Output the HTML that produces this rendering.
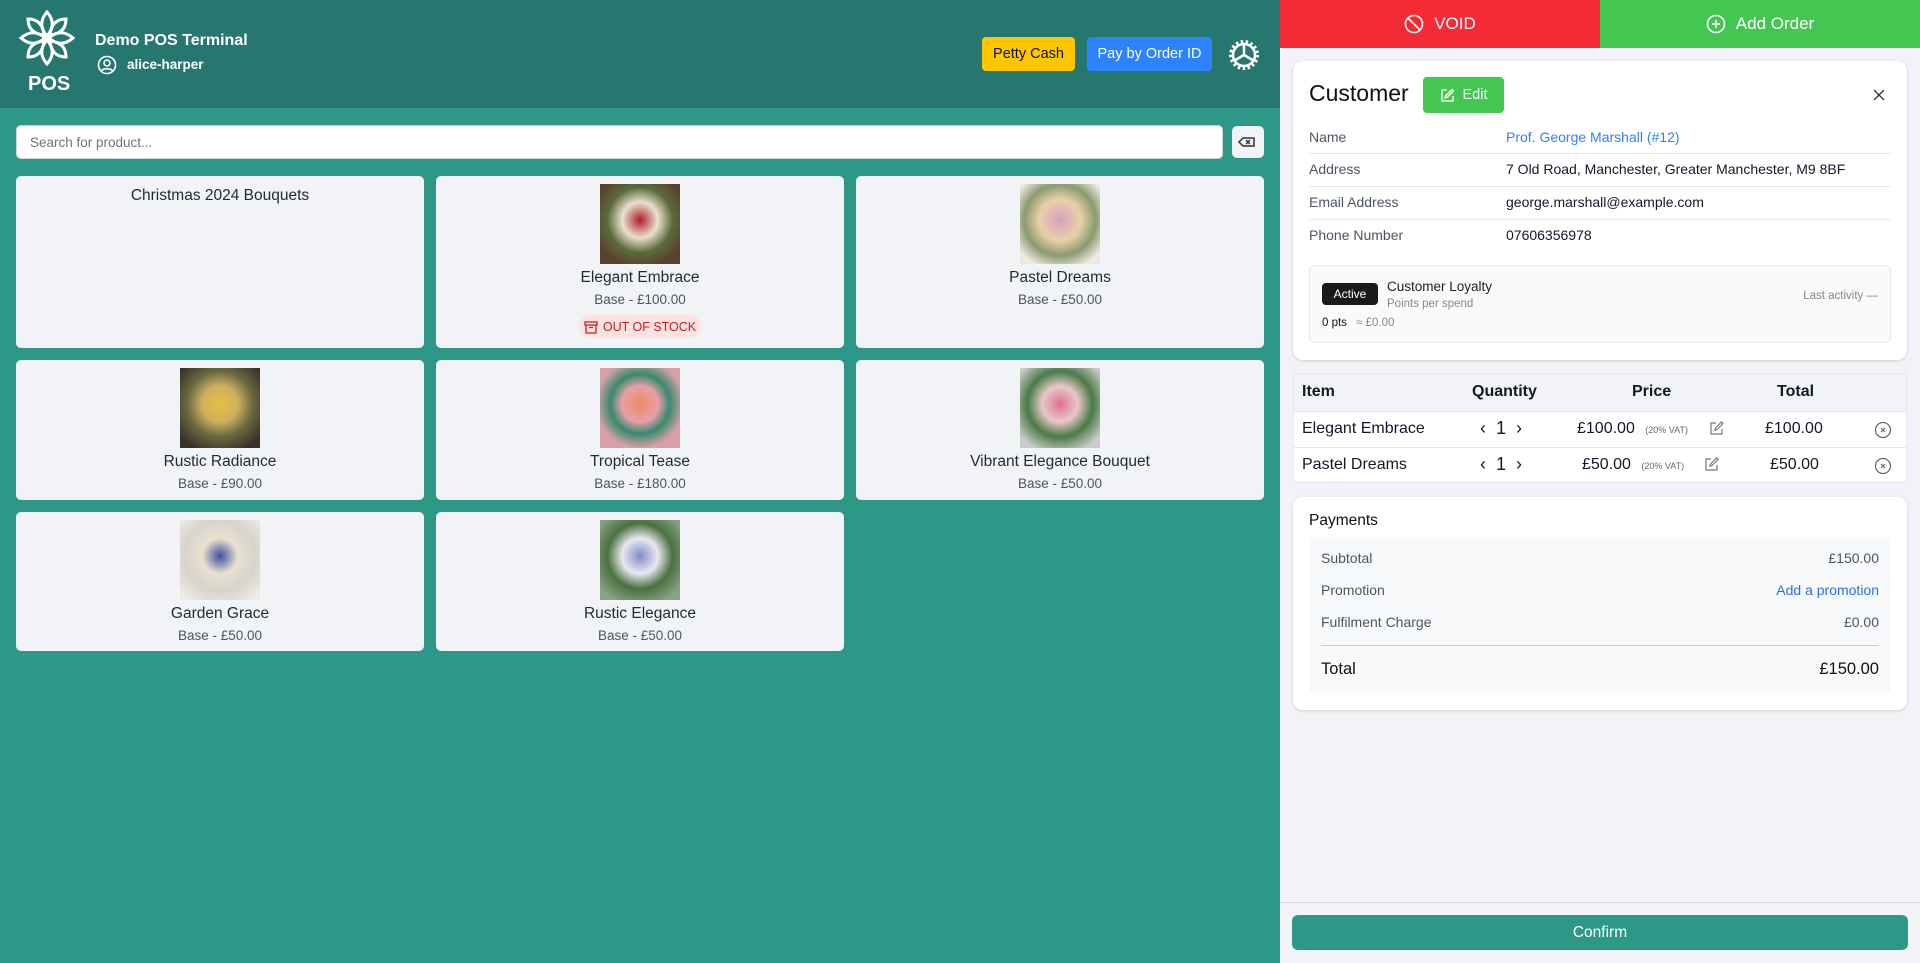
<!DOCTYPE html>
<html><head><meta charset="utf-8"><style>
*{box-sizing:border-box;margin:0;padding:0}
body{width:1920px;height:963px;overflow:hidden;font-family:"Liberation Sans",sans-serif;background:#2e9888;position:relative;color:#111827}
.abs{position:absolute}
.hdr{left:0;top:0;width:1280px;height:108px;background:#26776f}
.btn{position:absolute;border-radius:4px;font-size:14.5px;display:flex;align-items:center;justify-content:center}
.search{left:16px;top:125px;width:1207px;height:34px;background:#fff;border-radius:5px;border:1px solid #d1d5db;font-size:13.5px;color:#6b7280;padding:9px 13px}
.card{position:absolute;background:#f2f3f7;border-radius:5px;text-align:center}
.card .img{width:80px;height:80px;margin:8px auto 0}
.card .t{font-size:15.5px;color:#1f2937;margin-top:5px}
.card .p{font-size:13.5px;color:#4b5563;margin-top:5px}
.rp{left:1280px;top:0;width:640px;height:963px;background:#f2f3f6}
.panel{position:absolute;background:#fff;border-radius:10px;box-shadow:0 1px 3px rgba(0,0,0,.15)}
.row{position:absolute;left:16px;right:16px;font-size:14px;color:#4b5563}
.row span{position:absolute;left:197px;color:#111827}
.line{position:absolute;left:16px;right:16px;height:1px;background:#e5e7eb}
</style></head><body>
<div class="abs hdr"></div>
<svg class="abs" style="left:16px;top:8px" width="62" height="60" viewBox="0 0 62 60" fill="none" stroke="#fff" stroke-width="3">
<path d="M31 4 C38 12 38 20 31 28 C24 20 24 12 31 4Z"/><path d="M31 56 C38 48 38 40 31 32 C24 40 24 48 31 56Z"/>
<path d="M5 30 C13 23 21 23 29 30 C21 37 13 37 5 30Z"/><path d="M57 30 C49 23 41 23 33 30 C41 37 49 37 57 30Z"/>
<path d="M12 11 C22 11 27 17 28 27 C18 26 12 21 12 11Z"/><path d="M50 49 C40 49 35 43 34 33 C44 34 50 39 50 49Z"/>
<path d="M50 11 C50 21 44 26 34 27 C35 17 40 11 50 11Z"/><path d="M12 49 C12 39 18 34 28 33 C27 43 22 49 12 49Z"/>
</svg>
<div class="abs" style="left:28px;top:73px;color:#fff;font-size:20px;font-weight:bold">POS</div>
<div class="abs" style="left:95px;top:32px;color:#fff;font-size:16px;font-weight:bold">Demo POS Terminal</div>
<svg class="abs" style="left:97px;top:55px" width="20" height="20" viewBox="0 0 20 20" fill="none" stroke="#fff" stroke-width="1.6"><circle cx="10" cy="10" r="8.5"/><circle cx="10" cy="8" r="3"/><path d="M4.5 16 C6 13 14 13 15.5 16"/></svg>
<div class="abs" style="left:127px;top:57px;color:#fff;font-size:13.5px;font-weight:bold">alice-harper</div>
<div class="btn" style="left:982px;top:37px;width:93px;height:34px;background:#fcc700;color:#111">Petty Cash</div>
<div class="btn" style="left:1087px;top:37px;width:125px;height:34px;background:#2d83fb;color:#fff">Pay by Order ID</div>
<svg class="abs" style="left:1227px;top:38px" width="34" height="34" viewBox="0 0 34 34" fill="none" stroke="#fff"><circle cx="17" cy="17" r="13.5" stroke-dasharray="2.5 2.5" stroke-width="3"/><circle cx="17" cy="17" r="11" stroke-width="2.5"/><path d="M17 17 L17 6 M17 17 L26.5 22.5 M17 17 L7.5 22.5" stroke-width="2.5"/></svg>

<div class="abs search">Search for product...</div>
<div class="abs" style="left:1232px;top:126px;width:32px;height:32px;background:#f2f3f7;border-radius:5px"><svg width="32" height="32" viewBox="0 0 32 32" fill="none" stroke="#333" stroke-width="1.5"><path d="M11 12 H22 V20 H11 L7 16Z"/><path d="M14 14 L18 18 M18 14 L14 18"/></svg></div>

<div class="card" style="left:16px;top:176px;width:408px;height:172px"><div class="t" style="margin-top:11px">Christmas 2024 Bouquets</div></div>
<div class="card" style="left:436px;top:176px;width:408px;height:172px"><div class="img" style="background:radial-gradient(circle at 50% 45%,#b01e28 0,#e9e0cf 30%,#5a6b3a 55%,#5a4230 80%)"></div><div class="t">Elegant Embrace</div><div class="p">Base - £100.00</div>
<div style="margin:8px auto 0;width:122px;height:23px;border-radius:12px;background:#fde2e2;color:#c81e1e;font-size:12.5px;display:flex;align-items:center;justify-content:center;gap:5px"><svg width="14" height="14" viewBox="0 0 14 14" fill="none" stroke="#c81e1e" stroke-width="1.3"><rect x="1" y="2" width="12" height="3"/><path d="M2 5 V13 H12 V5 M5 7.5 H9"/></svg>OUT OF STOCK</div></div>
<div class="card" style="left:856px;top:176px;width:408px;height:172px"><div class="img" style="background:radial-gradient(circle at 50% 45%,#d8a0c0 0,#e8d0a8 35%,#8a9a70 60%,#efe8e0 85%)"></div><div class="t">Pastel Dreams</div><div class="p">Base - £50.00</div></div>
<div class="card" style="left:16px;top:360px;width:408px;height:140px"><div class="img" style="background:radial-gradient(circle at 50% 45%,#e8c040 0,#d0b060 30%,#6a6a40 55%,#3a3228 85%)"></div><div class="t">Rustic Radiance</div><div class="p">Base - £90.00</div></div>
<div class="card" style="left:436px;top:360px;width:408px;height:140px"><div class="img" style="background:radial-gradient(circle at 50% 45%,#f08a60 0,#e8a0a8 30%,#3a8a70 50%,#d8a0a8 75%)"></div><div class="t">Tropical Tease</div><div class="p">Base - £180.00</div></div>
<div class="card" style="left:856px;top:360px;width:408px;height:140px"><div class="img" style="background:radial-gradient(circle at 50% 45%,#e07090 0,#e8c8c8 30%,#4a7a48 55%,#c8ccc8 85%)"></div><div class="t">Vibrant Elegance Bouquet</div><div class="p">Base - £50.00</div></div>
<div class="card" style="left:16px;top:512px;width:408px;height:139px"><div class="img" style="background:radial-gradient(circle at 50% 45%,#4050a0 0,#e8e0d0 30%,#d8d4cc 60%,#eeeae4 90%)"></div><div class="t">Garden Grace</div><div class="p">Base - £50.00</div></div>
<div class="card" style="left:436px;top:512px;width:408px;height:139px"><div class="img" style="background:radial-gradient(circle at 50% 45%,#8088c8 0,#e8e8f0 30%,#4a7040 55%,#8aa088 85%)"></div><div class="t">Rustic Elegance</div><div class="p">Base - £50.00</div></div>

<div class="abs rp"></div>
<div class="abs" style="left:1280px;top:0;width:320px;height:48px;background:#f52a37;color:#fff;font-size:17px;display:flex;align-items:center;justify-content:center;gap:10px"><svg width="20" height="20" viewBox="0 0 20 20" fill="none" stroke="#fff" stroke-width="1.6"><circle cx="10" cy="10" r="8.5"/><path d="M4 4 L16 16"/></svg>VOID</div>
<div class="abs" style="left:1600px;top:0;width:320px;height:48px;background:#44c752;color:#fff;font-size:17px;display:flex;align-items:center;justify-content:center;gap:10px"><svg width="20" height="20" viewBox="0 0 20 20" fill="none" stroke="#fff" stroke-width="1.6"><circle cx="10" cy="10" r="8.5"/><path d="M10 6 V14 M6 10 H14"/></svg>Add Order</div>

<div class="panel" style="left:1293px;top:61px;width:614px;height:299px">
<div class="abs" style="left:16px;top:19px;font-size:23px;color:#111">Customer</div>
<div class="abs" style="left:130px;top:16px;width:81px;height:36px;background:#44c752;border-radius:4px;color:#fff;font-size:14.5px;display:flex;align-items:center;justify-content:center;gap:8px"><svg width="15" height="15" viewBox="0 0 15 15" fill="none" stroke="#fff" stroke-width="1.3"><path d="M7 2 H2 V13 H13 V8"/><path d="M12 1.5 L13.5 3 L7 9.5 L5 10 L5.5 8Z"/></svg>Edit</div>
<svg class="abs" style="left:580px;top:28px" width="12" height="12" viewBox="0 0 12 12" stroke="#333" stroke-width="1.3"><path d="M1 1 L11 11 M11 1 L1 11"/></svg>
<div class="row" style="top:68px">Name<span style="color:#2d83fb">Prof. George Marshall (#12)</span></div>
<div class="line" style="top:92px"></div>
<div class="row" style="top:100px">Address<span>7 Old Road, Manchester, Greater Manchester, M9 8BF</span></div>
<div class="line" style="top:125px"></div>
<div class="row" style="top:133px">Email Address<span>george.marshall@example.com</span></div>
<div class="line" style="top:158px"></div>
<div class="row" style="top:166px">Phone Number<span>07606356978</span></div>
<div class="abs" style="left:16px;top:204px;width:582px;height:78px;background:#f9fafb;border:1px solid #e5e7eb;border-radius:5px">
<div class="abs" style="left:12px;top:17px;width:56px;height:22px;background:#1a1a1a;border-radius:4px;color:#fff;font-size:12px;display:flex;align-items:center;justify-content:center">Active</div>
<div class="abs" style="left:77px;top:13px;font-size:13.5px;color:#222">Customer Loyalty</div>
<div class="abs" style="left:77px;top:32px;font-size:11.5px;color:#888">Points per spend</div>
<div class="abs" style="left:12px;top:51px;font-size:11.5px;color:#111">0 pts <span style="color:#888;margin-left:6px">≈ £0.00</span></div>
<div class="abs" style="right:12px;top:24px;font-size:11.5px;color:#888">Last activity —</div>
</div></div>

<div class="abs" style="left:1293px;top:373px;width:614px;height:110px;background:#fff;border:1px solid #e5e7eb">
<div class="abs" style="left:0;top:0;width:612px;height:37px;background:#f2f3f6"></div>
<div class="abs" style="left:0;top:73px;width:612px;height:1px;background:#e5e7eb"></div>
<div class="abs" style="left:0;top:37px;width:612px;height:1px;background:#e5e7eb"></div>
<div class="abs" style="left:8px;top:9px;font-size:16px;font-weight:bold">Item</div>
<div class="abs" style="left:178px;top:9px;font-size:16px;font-weight:bold">Quantity</div>
<div class="abs" style="left:338px;top:9px;font-size:16px;font-weight:bold">Price</div>
<div class="abs" style="left:483px;top:9px;font-size:16px;font-weight:bold">Total</div>
<div class="abs" style="left:8px;top:46px;font-size:16px">Elegant Embrace</div>
<div class="abs" style="left:186px;top:44px;font-size:18px">‹&nbsp; 1 &nbsp;›</div>
<div class="abs" style="left:283px;top:46px;font-size:16px">£100.00 <span style="font-size:9px;color:#666;margin-left:6px">(20% VAT)</span></div>
<svg class="abs" style="left:415px;top:46px" width="16" height="16" viewBox="0 0 16 16" fill="none" stroke="#777" stroke-width="1.2"><path d="M7 3 H2 V14 H13 V9"/><path d="M12.5 2 L14 3.5 L8 9.5 L6 10 L6.5 8Z"/></svg>
<div class="abs" style="left:471px;top:46px;font-size:16px">£100.00</div>
<svg class="abs" style="left:580px;top:47px" width="18" height="18" viewBox="0 0 18 18" fill="none" stroke="#666" stroke-width="1.2"><circle cx="9" cy="9" r="7.5"/><path d="M7 7 L11 11 M11 7 L7 11"/></svg>
<div class="abs" style="left:8px;top:82px;font-size:16px">Pastel Dreams</div>
<div class="abs" style="left:186px;top:80px;font-size:18px">‹&nbsp; 1 &nbsp;›</div>
<div class="abs" style="left:288px;top:82px;font-size:16px">£50.00 <span style="font-size:9px;color:#666;margin-left:6px">(20% VAT)</span></div>
<svg class="abs" style="left:410px;top:82px" width="16" height="16" viewBox="0 0 16 16" fill="none" stroke="#777" stroke-width="1.2"><path d="M7 3 H2 V14 H13 V9"/><path d="M12.5 2 L14 3.5 L8 9.5 L6 10 L6.5 8Z"/></svg>
<div class="abs" style="left:476px;top:82px;font-size:16px">£50.00</div>
<svg class="abs" style="left:580px;top:83px" width="18" height="18" viewBox="0 0 18 18" fill="none" stroke="#666" stroke-width="1.2"><circle cx="9" cy="9" r="7.5"/><path d="M7 7 L11 11 M11 7 L7 11"/></svg>
</div>

<div class="panel" style="left:1293px;top:497px;width:614px;height:213px">
<div class="abs" style="left:16px;top:15px;font-size:15.5px;color:#111">Payments</div>
<div class="abs" style="left:16px;top:40px;width:582px;height:156px;background:#f8f9fb;border-radius:5px;font-size:14px;color:#4b5563">
<div class="abs" style="left:12px;top:13px">Subtotal</div><div class="abs" style="right:12px;top:13px">£150.00</div>
<div class="abs" style="left:12px;top:45px">Promotion</div><div class="abs" style="right:12px;top:45px;color:#2d6cf0">Add a promotion</div>
<div class="abs" style="left:12px;top:77px">Fulfilment Charge</div><div class="abs" style="right:12px;top:77px">£0.00</div>
<div class="abs" style="left:12px;right:12px;top:108px;height:1px;background:#c8ccd2"></div>
<div class="abs" style="left:12px;top:123px;font-size:16.5px;color:#111">Total</div><div class="abs" style="right:12px;top:123px;font-size:16.5px;color:#111">£150.00</div>
</div></div>

<div class="abs" style="left:1280px;top:902px;width:640px;height:1px;background:#d4d6da"></div>
<div class="abs" style="left:1292px;top:915px;width:616px;height:35px;background:#2e9888;border-radius:6px;color:#fff;font-size:15.5px;display:flex;align-items:center;justify-content:center">Confirm</div>
</body></html>
